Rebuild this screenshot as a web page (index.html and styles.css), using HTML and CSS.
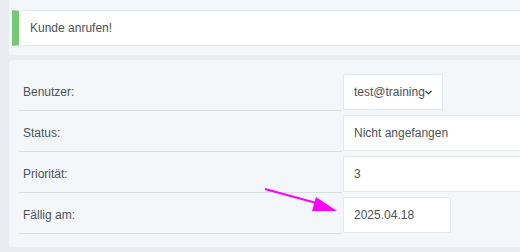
FILE: index.html
```html
<!DOCTYPE html>
<html lang="de">
<head>
<meta charset="UTF-8">
<meta name="viewport" content="width=device-width, initial-scale=1.0">
<title>Aufgabe</title>
<link rel="stylesheet" href="styles.css">
</head>
<body>

<div class="page">
    <section class="card card-note">
        <div class="note">Kunde anrufen!</div>
    </section>

    <section class="card card-details">
        <div class="row">
            <div class="label">Benutzer:</div>
            <div class="value">
                <div class="field field-select">
                    test@training
                    <svg class="chevron" width="7" height="5" viewBox="0 0 7 5">
                        <path d="M0.5 0.8 L3.5 3.8 L6.5 0.8" fill="none" stroke="#333" stroke-width="1.2"/>
                    </svg>
                </div>
            </div>
        </div>
        <div class="row">
            <div class="label">Status:</div>
            <div class="value">
                <div class="field field-wide">Nicht angefangen</div>
            </div>
        </div>
        <div class="row">
            <div class="label">Priorität:</div>
            <div class="value">
                <div class="field field-wide">3</div>
            </div>
        </div>
        <div class="row">
            <div class="label">Fällig am:</div>
            <div class="value">
                <div class="field field-date">2025.04.18</div>
            </div>
        </div>
    </section>
</div>

<!-- Markierungspfeil -->
<svg class="marker" width="520" height="252" viewBox="0 0 520 252">
    <line x1="265" y1="189" x2="320" y2="204" stroke="#ff00ff" stroke-width="2"/>
    <polygon points="316,197 337,211 312,211" fill="#ff00ff"/>
</svg>

</body>
</html>
```

FILE: styles.css
```css
body {
  margin: 0;
  padding: 0;
  background-color: #e9edf1;
  font-family: 'Liberation Sans', Arial, sans-serif;
  font-size: 12px;
  color: #4d5257;
  overflow: hidden;
}
.page {
  padding-left: 9px;
}
.card {
  background-color: #f4f7f9;
  border-radius: 4px 0 0 4px;
}
.card-note {
  padding: 10px 0 9px 3px;
  border-top-left-radius: 0;
}
.note {
  height: 34px;
  line-height: 34px;
  background-color: #fff;
  border-left: 7px solid #75cb75;
  border-top: 1px solid #e6e9ec;
  border-bottom: 1px solid #e6e9ec;
  padding-left: 11px;
}
.card-details {
  margin-top: 5px;
  padding: 10px 0 13px 10px;
}
.row {
  display: grid;
  grid-template-columns: 323px 1fr;
}
.label {
  padding: 4px 0 0 4px;
  height: 36px;
  line-height: 36px;
  border-bottom: 1px solid #dadee2;
}
.value {
  display: flex;
  align-items: flex-end;
  padding: 0 0 1px 1px;
}
.field {
  position: relative;
  box-sizing: border-box;
  height: 36px;
  line-height: 34px;
  padding: 0 10px;
  background-color: #fff;
  border: 1px solid #e6e9ec;
}
.field-select {
  width: 100px;
  white-space: nowrap;
}
.chevron {
  position: absolute;
  right: 10px;
  top: 15px;
}
.field-wide {
  flex: 1;
  border-right: none;
}
.field-date {
  width: 108px;
}
.marker {
  position: absolute;
  left: 0;
  top: 0;
  pointer-events: none;
}
```
